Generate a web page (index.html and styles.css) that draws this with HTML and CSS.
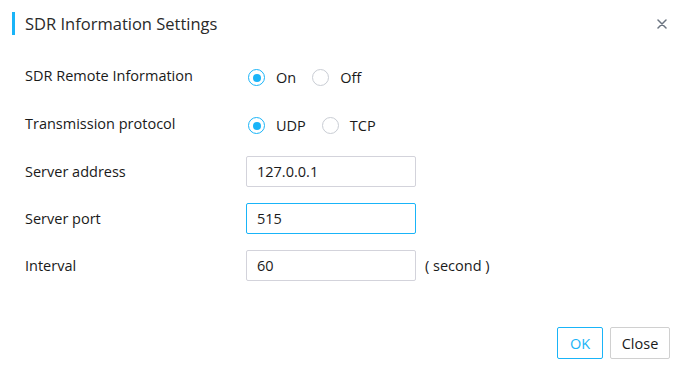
FILE: index.html
```html
<!DOCTYPE html>
<html>
<head>
<meta charset="utf-8">
<link rel="stylesheet" href="styles.css">
</head>
<body>
<div class="dialog">
  <div class="header">
    <span class="bar"></span>
    <span class="title">SDR Information Settings</span>
    <span class="close-x">
      <svg width="10" height="10" viewBox="0 0 10 10"><path d="M1 1L9 9M9 1L1 9" stroke="#6b7480" stroke-width="1.5" stroke-linecap="round"/></svg>
    </span>
  </div>
  <div class="form">
    <div class="row row-radio">
      <div class="label">SDR Remote Information</div>
      <div class="radios">
        <span class="radio checked"></span><span class="rtext">On</span>
        <span class="radio"></span><span class="rtext">Off</span>
      </div>
    </div>
    <div class="row row-radio">
      <div class="label">Transmission protocol</div>
      <div class="radios">
        <span class="radio checked"></span><span class="rtext">UDP</span>
        <span class="radio"></span><span class="rtext">TCP</span>
      </div>
    </div>
    <div class="row">
      <div class="label">Server address</div>
      <div class="input">127.0.0.1</div>
    </div>
    <div class="row">
      <div class="label">Server port</div>
      <div class="input focus">515</div>
    </div>
    <div class="row">
      <div class="label">Interval</div>
      <div class="input">60</div>
      <span class="unit">( second )</span>
    </div>
  </div>
  <div class="footer">
    <button class="btn ok">OK</button>
    <button class="btn close">Close</button>
  </div>
</div>
</body>
</html>
```
FILE: styles.css
```css
html, body {
  margin: 0;
  padding: 0;
  background: #fff;
}
body {
  font-family: "Open Sans", "Noto Sans", sans-serif;
  color: #1a1a1a;
  font-size: 14.5px;
  width: 689px;
  height: 371px;
  overflow: hidden;
}
.dialog {
  display: flex;
  flex-direction: column;
  height: 371px;
}
.header {
  display: flex;
  align-items: center;
  height: 23px;
  margin-top: 12px;
  padding-left: 12px;
  padding-right: 22px;
}
.bar {
  width: 3px;
  height: 23px;
  background: #19b4f8;
  margin-right: 10px;
}
.title {
  font-size: 16.5px;
  color: #2a2a2a;
  flex: 1;
  line-height: 23px;
}
.close-x {
  display: flex;
  align-items: center;
}
.form {
  display: flex;
  flex-direction: column;
  gap: 16px;
  margin-top: 25px;
  padding-left: 25px;
}
.row {
  display: flex;
  align-items: center;
  height: 31px;
  box-sizing: border-box;
}
.row-radio {
  padding-top: 2px;
  margin-top: 1px;
}
.label {
  width: 221px;
  flex: none;
}
.label, .rtext, .unit, .input {
  line-height: 20px;
}
.row-radio .label {
  margin-top: -3px;
}
.radios {
  display: flex;
  align-items: center;
  padding-left: 2px;
}
.radio {
  box-sizing: border-box;
  width: 17px;
  height: 17px;
  border-radius: 50%;
  border: 1px solid #c9cdd4;
  display: flex;
  align-items: center;
  justify-content: center;
  margin-right: 11px;
  background: #fff;
}
.radio.checked {
  border: 1.5px solid #19b4f8;
}
.radio.checked::after {
  content: "";
  width: 8px;
  height: 8px;
  border-radius: 50%;
  background: #19b4f8;
}
.rtext {
  margin-right: 16px;
}
.input {
  box-sizing: border-box;
  width: 170px;
  height: 31px;
  border: 1px solid #d3d3db;
  border-radius: 2px;
  padding: 4px 10px;
  display: flex;
  align-items: center;
}
.input.focus {
  border-color: #19b4f8;
}
.unit {
  margin-left: 9px;
}
.footer {
  display: flex;
  justify-content: flex-end;
  gap: 7px;
  margin-top: auto;
  margin-bottom: 12px;
  padding-right: 19px;
}
.btn {
  box-sizing: border-box;
  height: 32px;
  font-family: inherit;
  font-size: 14.5px;
  background: #fff;
  border: 1px solid #d0d0d0;
  border-radius: 2px;
  color: #1a1a1a;
  padding: 0;
  cursor: pointer;
}
.btn.ok {
  width: 46px;
  border-color: #19b4f8;
  color: #19b4f8;
}
.btn.close {
  width: 60px;
}
```
